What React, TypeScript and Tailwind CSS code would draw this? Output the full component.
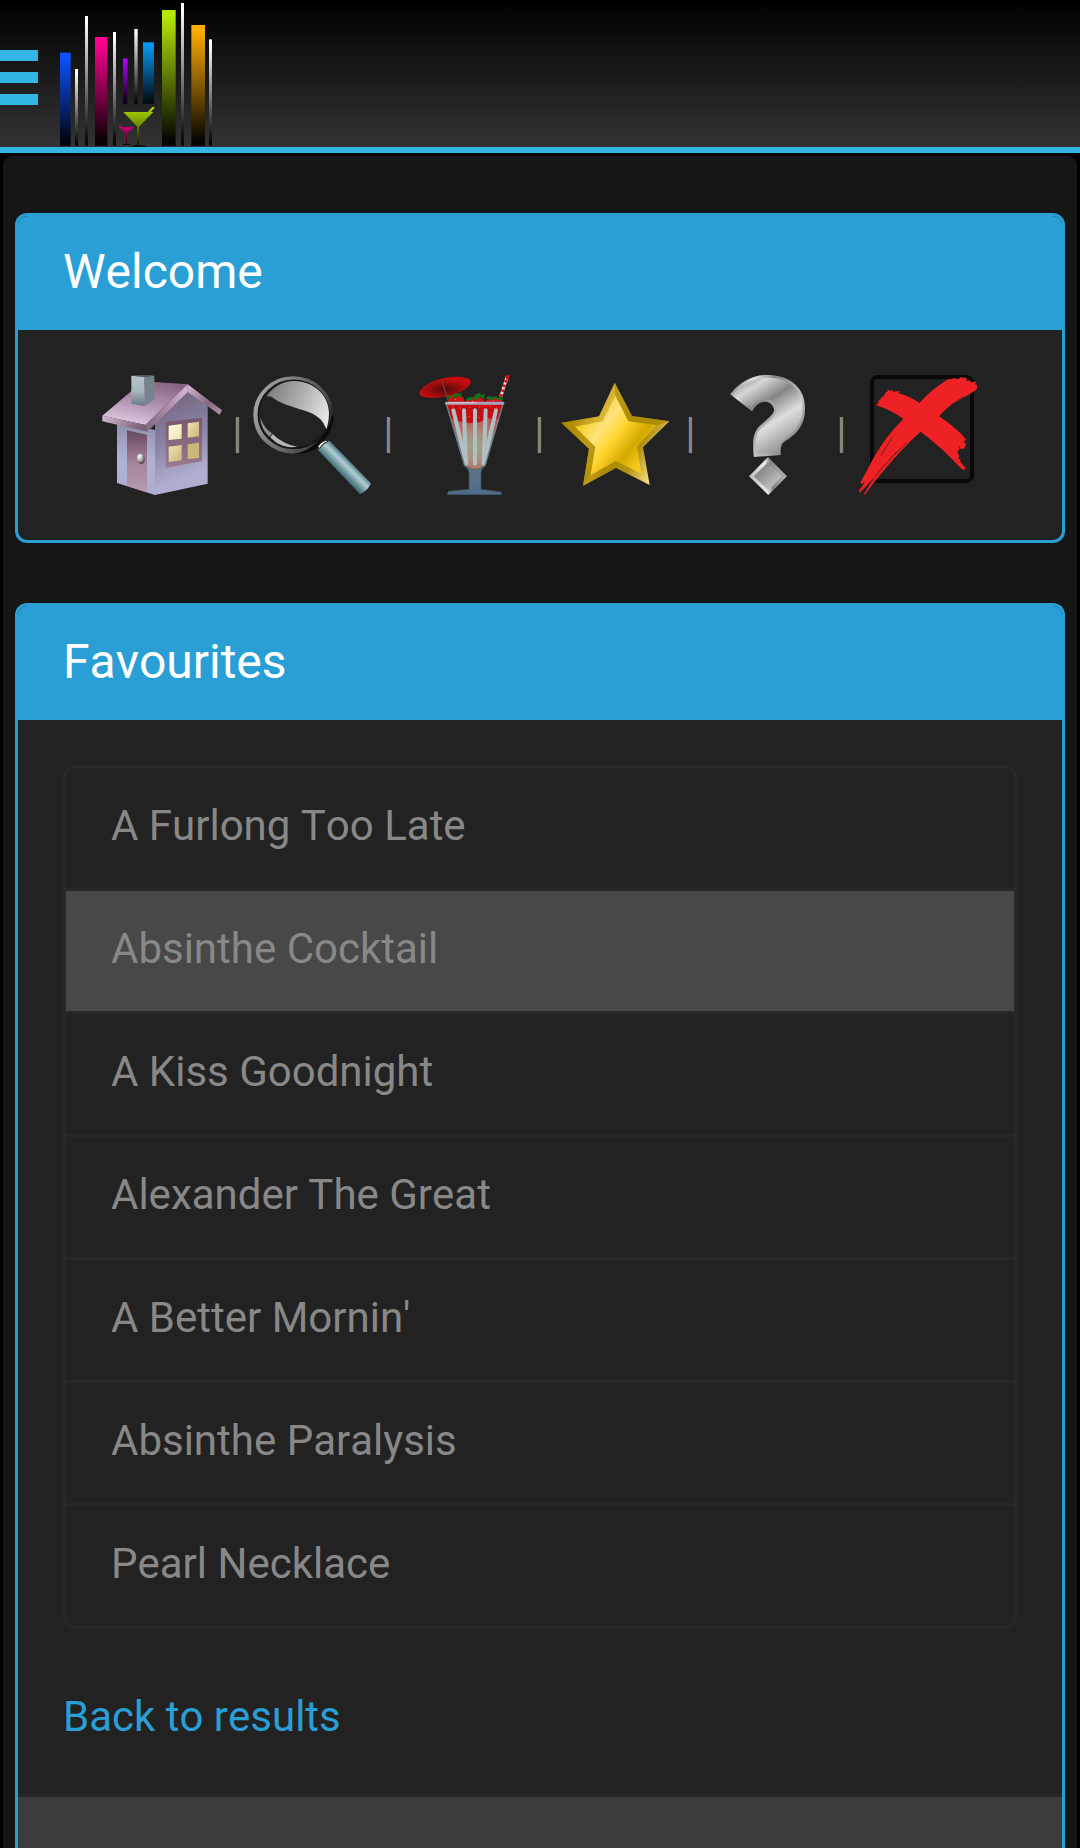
import React from 'react';

const favourites = [
  'A Furlong Too Late',
  'Absinthe Cocktail',
  'A Kiss Goodnight',
  'Alexander The Great',
  "A Better Mornin'",
  'Absinthe Paralysis',
  'Pearl Necklace',
];

const logoBars = [
  { x: 180, y: 158, w: 32, b: 438, from: '#0d52ff', to: '#00040f' },
  { x: 225, y: 207, w: 9, b: 438, from: '#ffffff', to: '#0a0a0a' },
  { x: 255, y: 48, w: 9, b: 438, from: '#ffffff', to: '#0a0a0a' },
  { x: 285, y: 111, w: 37, b: 438, from: '#ff0090', to: '#0a0006' },
  { x: 339, y: 96, w: 9, b: 438, from: '#ffffff', to: '#0a0a0a' },
  { x: 369, y: 175, w: 13, b: 312, from: '#b400ff', to: '#10001a' },
  { x: 403, y: 87, w: 10, b: 312, from: '#ffffff', to: '#0a0a0a' },
  { x: 429, y: 127, w: 33, b: 312, from: '#0499f2', to: '#010d16' },
  { x: 486, y: 30, w: 41, b: 438, from: '#b5e805', to: '#040600' },
  { x: 543, y: 9, w: 9, b: 438, from: '#ffffff', to: '#0a0a0a' },
  { x: 574, y: 75, w: 41, b: 438, from: '#ffae00', to: '#070500' },
  { x: 627, y: 118, w: 9, b: 438, from: '#ffffff', to: '#0a0a0a' },
];

function Logo() {
  return (
    <svg className="h-[147px] w-[153px]" viewBox="180 0 459 441" role="img" aria-label="Cocktail Bar">
      <defs>
        {logoBars.map((bar, i) => (
          <linearGradient key={i} id={`bar${i}`} x1="0" y1="0" x2="0" y2="1">
            <stop offset="0.04" stopColor={bar.from} />
            <stop offset="0.95" stopColor={bar.to} />
          </linearGradient>
        ))}
        <linearGradient id="glassGreen" gradientUnits="userSpaceOnUse" x1="0" y1="320" x2="0" y2="438">
          <stop offset="0" stopColor="#b0e000" />
          <stop offset="0.5" stopColor="#698600" />
          <stop offset="1" stopColor="#080a00" />
        </linearGradient>
        <linearGradient id="glassPink" gradientUnits="userSpaceOnUse" x1="0" y1="374" x2="0" y2="435">
          <stop offset="0" stopColor="#d6007a" />
          <stop offset="0.5" stopColor="#85004c" />
          <stop offset="1" stopColor="#140009" />
        </linearGradient>
      </defs>
      {logoBars.map((bar, i) => (
        <rect key={i} x={bar.x} y={bar.y} width={bar.w} height={bar.b - bar.y} fill={`url(#bar${i})`} />
      ))}
      <path
        fill="url(#glassGreen)"
        d="M370 336H443L457 321H463V325L452 336H460L417 380V434L436 437V440H395V437L412 434V380Z"
      />
      <path fill="url(#glassPink)" d="M357 375H361L364 381H403L381 403V431L392 433V435H368V433L378 431V403L357 381Z" />
    </svg>
  );
}

function HouseIcon() {
  return (
    <svg className="size-[120px]" viewBox="66 75 360 360" aria-hidden="true">
      <defs>
        <linearGradient id="roof" x1="0.7" y1="0" x2="0.3" y2="1">
          <stop offset="0" stopColor="#866482" />
          <stop offset="0.5" stopColor="#b192b0" />
          <stop offset="1" stopColor="#e0cbe2" />
        </linearGradient>
        <linearGradient id="roofEdge" x1="0" y1="0" x2="1" y2="0.3">
          <stop offset="0" stopColor="#d6bbd5" />
          <stop offset="1" stopColor="#7b5f77" />
        </linearGradient>
        <linearGradient id="roofFront" x1="0" y1="1" x2="1" y2="0">
          <stop offset="0" stopColor="#806779" />
          <stop offset="0.5" stopColor="#a98aa8" />
          <stop offset="1" stopColor="#dabedb" />
        </linearGradient>
        <linearGradient id="roofRight" x1="0" y1="0" x2="1" y2="1">
          <stop offset="0" stopColor="#d9bad9" />
          <stop offset="0.6" stopColor="#856980" />
          <stop offset="1" stopColor="#b397b0" />
        </linearGradient>
        <linearGradient id="wallFront" x1="0.3" y1="0" x2="0.5" y2="1">
          <stop offset="0.1" stopColor="#766984" />
          <stop offset="0.5" stopColor="#8e86a8" />
          <stop offset="0.85" stopColor="#b0aed0" />
        </linearGradient>
        <linearGradient id="wallSide" x1="0" y1="0" x2="0" y2="1">
          <stop offset="0" stopColor="#8f8eac" />
          <stop offset="0.5" stopColor="#b1b1d5" />
          <stop offset="1" stopColor="#adadcf" />
        </linearGradient>
        <linearGradient id="door" x1="0" y1="0" x2="0" y2="1">
          <stop offset="0" stopColor="#674960" />
          <stop offset="0.55" stopColor="#a5869b" />
          <stop offset="1" stopColor="#b69aae" />
        </linearGradient>
        <linearGradient id="frame" x1="0" y1="0" x2="0" y2="1">
          <stop offset="0" stopColor="#79586f" />
          <stop offset="1" stopColor="#9a7a90" />
        </linearGradient>
        <linearGradient id="paneLight" x1="0" y1="0" x2="1" y2="1">
          <stop offset="0" stopColor="#fffbe0" />
          <stop offset="1" stopColor="#ede3b0" />
        </linearGradient>
        <linearGradient id="paneDark" x1="0" y1="0" x2="1" y2="1">
          <stop offset="0" stopColor="#eee4b0" />
          <stop offset="1" stopColor="#c8b87a" />
        </linearGradient>
        <linearGradient id="chimney" x1="0" y1="0" x2="0" y2="1">
          <stop offset="0" stopColor="#b6c4ca" />
          <stop offset="0.5" stopColor="#a8b7be" />
          <stop offset="1" stopColor="#68777f" />
        </linearGradient>
        <radialGradient id="knob" cx="0.35" cy="0.3" r="0.7">
          <stop offset="0" stopColor="#ffffff" />
          <stop offset="1" stopColor="#8b8b8b" />
        </radialGradient>
      </defs>
      <path fill="url(#wallSide)" d="M111 217L225 240V435L111 399Z" />
      <path fill="url(#wallFront)" d="M225 218L322 120L383 164V401L225 435Z" />
      <path fill="url(#door)" d="M141 241L201 254V427L141 407Z" />
      <path fill="url(#roof)" d="M67 197L158 120L224 96L323 103L196 225Z" />
      <path fill="url(#roofEdge)" d="M67 197L196 225L202 245L67 214Z" />
      <path fill="url(#roofFront)" d="M196 225L323 103V126L202 245Z" />
      <path fill="url(#roofRight)" d="M323 103L426 181L419 194L323 126Z" />
      <path fill="url(#chimney)" d="M154 77L194 80V169L154 161Z" />
      <path fill="#74848c" d="M194 80L223 77V148L194 169Z" />
      <path fill="#535f66" d="M154 77L180 75L224 76L194 81Z" />
      <path fill="url(#frame)" d="M257 216L366 203V334L257 353Z" />
      <path fill="url(#paneLight)" d="M266 227L305 222V266L266 270Z" />
      <path fill="url(#paneDark)" d="M323 220L357 215V259L323 263Z" />
      <path fill="url(#paneDark)" d="M266 290L305 285V331L266 336Z" />
      <path fill="#cbb97b" d="M323 283L357 278V323L323 328Z" />
      <ellipse cx="184" cy="328" rx="10" ry="14" fill="#624b5c" />
      <ellipse cx="181" cy="324" rx="10" ry="13" fill="url(#knob)" />
    </svg>
  );
}

function SearchIcon() {
  return (
    <svg className="size-[120px]" viewBox="519 75 360 360" aria-hidden="true">
      <defs>
        <linearGradient id="ring" x1="0" y1="0.3" x2="1" y2="0.7">
          <stop offset="0" stopColor="#a5a5a5" />
          <stop offset="0.5" stopColor="#696969" />
          <stop offset="0.8" stopColor="#4a4a4a" />
          <stop offset="1" stopColor="#1c1c1c" />
        </linearGradient>
        <linearGradient id="glare" x1="0" y1="0.3" x2="1" y2="0.6">
          <stop offset="0" stopColor="#7d7d7d" />
          <stop offset="0.5" stopColor="#adadad" />
          <stop offset="1" stopColor="#e4e4e4" />
        </linearGradient>
        <linearGradient id="handle" gradientUnits="userSpaceOnUse" x1="779" y1="370" x2="814" y2="335">
          <stop offset="0" stopColor="#406873" />
          <stop offset="0.25" stopColor="#679099" />
          <stop offset="0.6" stopColor="#b5ced5" />
          <stop offset="0.8" stopColor="#7fa4ae" />
          <stop offset="1" stopColor="#3c606a" />
        </linearGradient>
      </defs>
      <ellipse cx="640" cy="195" rx="113" ry="109" fill="none" stroke="url(#ring)" strokeWidth="14" />
      <ellipse cx="641" cy="193" rx="106" ry="102" fill="none" stroke="#161616" strokeWidth="5" />
      <path fill="url(#glare)" d="M559 139C580 109 611 93 642 93C700 93 747 135 747 190C747 207 744 224 739 238C729 208 709 193 675 182C634 169 602 160 583 146C575 140 568 138 559 139Z" />
      <path fill="#8f8f8f" d="M541 202C548 222 557 238 576 250L569 260C551 245 542 226 541 202Z" />
      <path fill="#b5b5b5" d="M578 252C598 272 620 283 652 290C616 296 590 283 571 262Z" />
      <path fill="#0b0b0b" d="M722 263C742 242 753 221 755 196L762 197C759 232 741 263 721 287L712 294C690 308 665 312 640 312C680 304 704 285 722 263Z" />
      <path fill="url(#handle)" d="M715 294L746 272Q750 272 753 276L873 400Q866 420 840 433L716 302Z" />
      <path fill="#eee9de" stroke="#1c1c1c" strokeWidth="3" d="M713 290Q720 276 738 270L743 274Q727 281 719 295Z" />
    </svg>
  );
}

function CocktailIcon() {
  return (
    <svg className="size-[120px]" viewBox="42 75 360 360" aria-hidden="true">
      <defs>
        <radialGradient id="umbrella" cx="0.5" cy="0.6" r="0.5">
          <stop offset="0" stopColor="#4d0b0b" />
          <stop offset="0.7" stopColor="#a30c0f" />
          <stop offset="1" stopColor="#c40d10" />
        </radialGradient>
        <radialGradient id="drink" gradientUnits="userSpaceOnUse" cx="254" cy="290" r="95">
          <stop offset="0" stopColor="#98a78d" />
          <stop offset="0.45" stopColor="#ae8c7a" />
          <stop offset="1" stopColor="#b9544e" />
        </radialGradient>
        <linearGradient id="stem" x1="0" y1="0" x2="0" y2="1">
          <stop offset="0" stopColor="#5b7684" />
          <stop offset="1" stopColor="#506a8c" />
        </linearGradient>
      </defs>
      <path fill="url(#drink)" d="M168 160H341L285 345Q278 358 255 360Q232 358 226 345Z" />
      <path fill="#c70d12" d="M169 163H340L325 205Q310 214 292 202Q270 222 248 218Q228 222 205 212L183 206Z" />
      <path fill="#d01216" d="M174 155Q177 132 199 130Q220 132 224 155ZM226 157Q228 145 244 143Q266 131 286 155ZM286 157Q292 143 309 143Q334 141 338 157Z" />
      <path d="M183 180Q190 201 207 214M226 177Q250 167 278 188M232 207Q258 219 276 196M290 181Q307 175 325 185" fill="none" stroke="#7a2520" strokeWidth="2" />
      <path d="M187 169H190M210 174H213M238 172H241M268 170H271M299 169H302M319 174H322M236 199H239M265 202H268M195 149H198M246 154H249M308 151H311" fill="none" stroke="#ef826b" strokeWidth="3" />
      <path fill="#0d7418" d="M170 140L182 132L179 126L193 131L204 124L203 132L215 129L212 138L218 147L203 137L194 147L190 135L177 147ZM227 149L237 141L250 143L257 133L269 128L272 135L288 133L280 140L287 149L270 140L260 150L249 146L238 153ZM290 141L301 137L304 143L319 138L323 145L336 139L339 151L325 149L314 145L304 152L299 145L289 149Z" />
      <g stroke="#afbfc4" strokeWidth="12" strokeLinecap="round">
        <path d="M190 181L229 341" />
        <path d="M222 181L228 341" />
        <path d="M255 181V341" />
        <path d="M287 181L281 341" />
        <path d="M318 181L281 341" />
      </g>
      <path fill="none" stroke="#688490" strokeWidth="4" d="M169 162L223 344Q232 359 255 360Q278 359 286 344L339 162" />
      <rect x="165" y="155" width="178" height="9" rx="4" fill="#aba0b7" />
      <path stroke="#e7c9cf" strokeWidth="3" d="M174 158H258" />
      <path fill="url(#stem)" stroke="#3c5353" strokeWidth="2" d="M229 350Q254 367 281 350Q273 359 273 368V418L332 426Q336 429 334 434H173Q171 428 176 424L237 418V368Q235 358 229 350Z" />
      <path stroke="#e8dede" strokeWidth="9" d="M332 140L353 76" />
      <path stroke="#dd1117" strokeWidth="9" strokeDasharray="8 7" d="M332 140L353 76" />
      <path fill="#c41014" d="M348 75H357V86L348 89Z" />
      <path
        fill="url(#umbrella)"
        stroke="#b60e11"
        strokeWidth="2"
        d="M89 130C90 112 127 91 167 84C205 78 241 82 242 95C242 110 213 127 176 137C136 146 91 145 89 130Z"
      />
      <path stroke="#80502b" strokeWidth="3" d="M156 94L175 153" />
    </svg>
  );
}

function StarIcon() {
  return (
    <svg className="size-[120px]" viewBox="495 75 360 360" aria-hidden="true">
      <defs>
        <linearGradient id="starEdge" gradientUnits="userSpaceOnUse" x1="540" y1="215" x2="795" y2="360">
          <stop offset="0" stopColor="#ad8a02" />
          <stop offset="0.3" stopColor="#e0bc40" />
          <stop offset="0.55" stopColor="#ac8b04" />
          <stop offset="0.75" stopColor="#b09010" />
          <stop offset="1" stopColor="#f5de7d" />
        </linearGradient>
        <linearGradient id="starFace" gradientUnits="userSpaceOnUse" x1="585" y1="195" x2="758" y2="330">
          <stop offset="0" stopColor="#f6ca20" />
          <stop offset="0.3" stopColor="#ffe57c" />
          <stop offset="0.52" stopColor="#ffd42d" />
          <stop offset="0.78" stopColor="#d2a900" />
          <stop offset="1" stopColor="#f8ca21" />
        </linearGradient>
      </defs>
      <path fill="url(#starEdge)" d="M674 98L726 198L838 214L759 292L779 405L678 354L579 408L597 296L514 218L627 199Z" />
      <path fill="#ac8b00" opacity="0.7" d="M674 98L726 198L838 214L800 226L715 214L676 138ZM514 218L555 230L616 290L602 375L579 408L597 296Z" />
      <path fill="url(#starFace)" d="M676 138L715 214L800 226L741 289L754 371L678 333L602 375L616 290L555 230L638 214Z" />
    </svg>
  );
}

function HelpIcon() {
  return (
    <svg className="size-[120px]" viewBox="48 75 360 360" aria-hidden="true">
      <defs>
        <linearGradient id="metal" gradientUnits="userSpaceOnUse" x1="145" y1="100" x2="285" y2="320">
          <stop offset="0" stopColor="#a0a0a0" />
          <stop offset="0.13" stopColor="#d6d6d6" />
          <stop offset="0.35" stopColor="#858585" />
          <stop offset="0.6" stopColor="#dedede" />
          <stop offset="0.9" stopColor="#979797" />
        </linearGradient>
        <linearGradient id="metalEdge" gradientUnits="userSpaceOnUse" x1="125" y1="115" x2="330" y2="280">
          <stop offset="0" stopColor="#828282" />
          <stop offset="0.12" stopColor="#e2e2e2" />
          <stop offset="0.3" stopColor="#858585" />
          <stop offset="0.7" stopColor="#c5c5c5" />
          <stop offset="1" stopColor="#707070" />
        </linearGradient>
        <linearGradient id="gem" x1="0" y1="0" x2="1" y2="1">
          <stop offset="0.1" stopColor="#777777" />
          <stop offset="0.9" stopColor="#cccccc" />
        </linearGradient>
        <linearGradient id="gemEdge" x1="0" y1="0.6" x2="1" y2="0.5">
          <stop offset="0" stopColor="#bcbcbc" />
          <stop offset="0.45" stopColor="#eaeaea" />
          <stop offset="0.6" stopColor="#858585" />
          <stop offset="1" stopColor="#b5b5b5" />
        </linearGradient>
      </defs>
      <path
        fill="url(#metal)"
        stroke="url(#metalEdge)"
        strokeWidth="8"
        d="M126 132C157 95 195 77 241 79C302 82 341 120 341 174C342 218 321 248 286 268C271 277 267 286 268 311L195 317C191 272 192 246 217 226C242 205 262 189 255 174C249 157 238 150 225 151C207 152 195 161 185 178Z"
      />
      <path fill="url(#gemEdge)" d="M234 321L291 379L235 435L177 379Z" />
      <path fill="url(#gem)" d="M234 337L276 379L235 421L191 379Z" />
    </svg>
  );
}

function CloseIcon() {
  return (
    <svg className="size-[120px]" viewBox="501 75 360 360" aria-hidden="true">
      <rect x="546" y="81" width="300" height="312" rx="17" fill="none" stroke="#080809" strokeWidth="12" />
      <path
        fill="#ee2124"
        d="M558 166L568 155L563 154L575 145L571 143L583 139L580 136L589 130L586 127L594 124L591 117L602 123L611 120L608 125L629 123L626 130Q660 139 688 159Q723 119 775 87L785 88L790 84L805 87L811 82L831 84L828 92L844 92L841 97L858 95L855 103L864 106L862 116L848 127L807 151L798 157L786 162Q765 179 747 199Q797 231 829 269L821 275L828 281L823 296L812 297L807 289L808 300L801 303L808 319L804 324L812 330L811 335L827 354L821 361L812 354Q755 292 692 245L665 270Q594 340 524 434L520 435Q540 401 556 380L541 395L510 428L506 423L525 397L516 402L511 398L523 376L551 323Q590 255 640 207Q604 180 558 166Z"
      />
      <path
        d="M607 262L572 316M622 304L575 355L556 380M650 278L612 315M823 139L790 160"
        fill="none"
        stroke="#222222"
        strokeWidth="2"
      />
    </svg>
  );
}

const menu = [
  { label: 'Home', icon: <HouseIcon /> },
  { label: 'Search', icon: <SearchIcon /> },
  { label: 'Cocktails', icon: <CocktailIcon /> },
  { label: 'Favourites', icon: <StarIcon /> },
  { label: 'Help', icon: <HelpIcon /> },
  { label: 'Exit', icon: <CloseIcon /> },
];

function PanelHeading({ children }: { children: React.ReactNode }) {
  return (
    <h2 className="rounded-t-[9px] bg-[#2a9fd6] px-[45px] pt-[30px] pb-8 text-5xl leading-[52px] text-white">
      {children}
    </h2>
  );
}

function App() {
  return (
    <div className="flex min-h-screen flex-col bg-black font-['Roboto',sans-serif] text-[42px] leading-[60px] text-[#888888] [font-kerning:none]">
      <header className="flex h-[153px] items-start border-b-6 border-[#33b5e5] bg-linear-to-b/srgb from-black to-[#333333]">
        <button type="button" aria-label="Menu" className="mt-[50px] mr-[22px] flex w-[38px] flex-col gap-[11px]">
          <span className="h-[11px] w-full bg-[#33b5e5]" />
          <span className="h-[11px] w-full bg-[#33b5e5]" />
          <span className="h-[11px] w-full bg-[#33b5e5]" />
        </button>
        <Logo />
      </header>

      <main className="mx-[3px] mt-[3px] flex grow flex-col gap-[60px] rounded-t-[9px] bg-[#161616] px-3 pt-[57px]">
        <section className="rounded-xl border-3 border-[#2a9fd6] bg-[#222222]">
          <PanelHeading>Welcome</PanelHeading>
          <nav className="flex items-center justify-center py-[45px] pr-px">
            {menu.map((item, i) => (
              <React.Fragment key={item.label}>
                {i > 0 && <span className="w-[31px] pb-1 text-center">|</span>}
                <a href="#" aria-label={item.label} className="shrink-0">
                  {item.icon}
                </a>
              </React.Fragment>
            ))}
          </nav>
        </section>

        <section className="flex grow flex-col rounded-t-xl border-x-3 border-t-3 border-[#2a9fd6] bg-[#222222]">
          <PanelHeading>Favourites</PanelHeading>
          <div className="px-[45px] pt-[45px] pb-[47px]">
            <ul className="mb-[58px] divide-y-3 divide-[#282828] rounded-xl border-3 border-[#282828]">
              {favourites.map((name) => (
                <li key={name}>
                  <a
                    href="#"
                    className={
                      name === 'Absinthe Cocktail'
                        ? 'block bg-[#484848] px-[45px] pt-7 pb-8'
                        : 'block px-[45px] pt-7 pb-8'
                    }
                  >
                    {name}
                  </a>
                </li>
              ))}
            </ul>
            <a href="#" className="block text-[#2a9fd6]">
              Back to results
            </a>
          </div>
          <footer className="grow border-t-3 border-[#282828] bg-[#3c3c3c]" />
        </section>
      </main>
    </div>
  );
}

export default App;
